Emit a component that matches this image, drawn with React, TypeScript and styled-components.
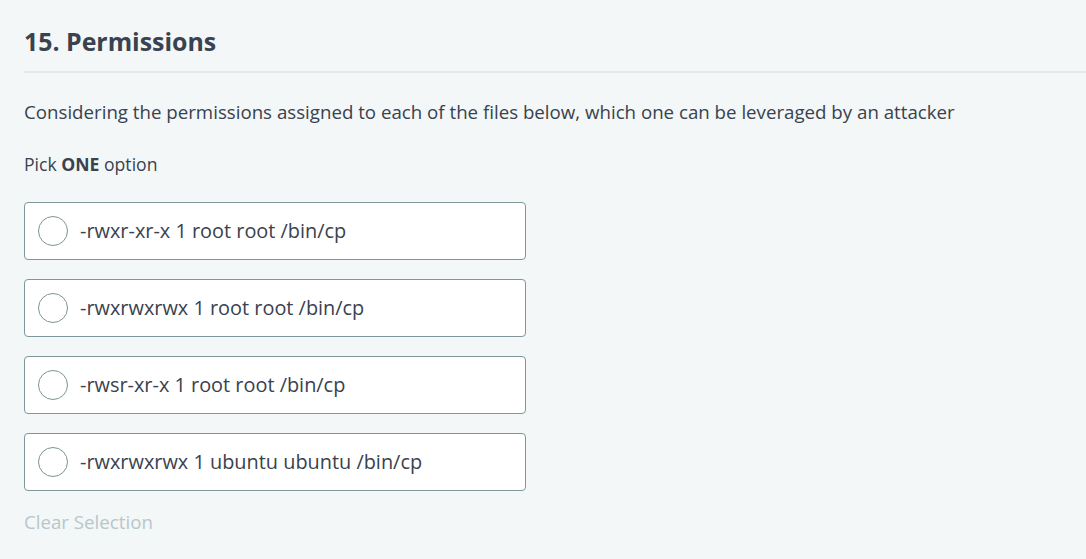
import React from "react";
import styled, { createGlobalStyle } from "styled-components";

const Global = createGlobalStyle`
  html, body { margin: 0; padding: 0; background: #f3f7f7; }
  body { font-family: "Open Sans", "Liberation Sans", sans-serif; color: #39424e; }
`;

const Page = styled.div`
  padding: 21px 0 0 24px;
  min-height: 559px;
  box-sizing: border-box;
`;

const Title = styled.h1`
  margin: 0;
  font-size: 24.9px;
  font-weight: 700;
  line-height: 40px;
  color: #39424e;
  padding-bottom: 10px;
  border-bottom: 2px solid #e3e9e9;
`;

const Question = styled.p`
  margin: 25px 0 0 0;
  font-size: 18.7px;
  line-height: 28px;
  color: #39424e;
`;

const Hint = styled.p`
  margin: 26px 0 0 0;
  font-size: 17.6px;
  line-height: 24px;
  color: #39424e;
  b { font-weight: 700; }
`;

const Options = styled.div`
  margin-top: 26px;
  display: flex;
  flex-direction: column;
  gap: 19px;
  width: 502px;
`;

const Option = styled.label`
  display: flex;
  align-items: center;
  gap: 12px;
  height: 58px;
  box-sizing: border-box;
  padding: 0 0 1px 13px;
  background: #ffffff;
  border: 1px solid #7f979b;
  border-radius: 4px;
  cursor: pointer;
  font-size: 19.9px;
  color: #39424e;
`;

const Radio = styled.span`
  width: 30px;
  height: 30px;
  box-sizing: border-box;
  border-radius: 50%;
  border: 1px solid #7d9396;
  background: #fff;
  flex: none;
`;

const Clear = styled.div`
  margin-top: 19px;
  font-size: 18.7px;
  line-height: 24px;
  color: #b8c6cb;
`;

const options = [
  "-rwxr-xr-x 1 root root /bin/cp",
  "-rwxrwxrwx 1 root root /bin/cp",
  "-rwsr-xr-x 1 root root /bin/cp",
  "-rwxrwxrwx 1 ubuntu ubuntu /bin/cp",
];

export default function App() {
  return (
    <>
      <Global />
      <Page>
        <Title>15. Permissions</Title>
        <Question>
          Considering the permissions assigned to each of the files below, which one can be leveraged by an attacker
        </Question>
        <Hint>
          Pick <b>ONE</b> option
        </Hint>
        <Options>
          {options.map((o, i) => (
            <Option key={i}>
              <Radio />
              {o}
            </Option>
          ))}
        </Options>
        <Clear>Clear Selection</Clear>
      </Page>
    </>
  );
}
